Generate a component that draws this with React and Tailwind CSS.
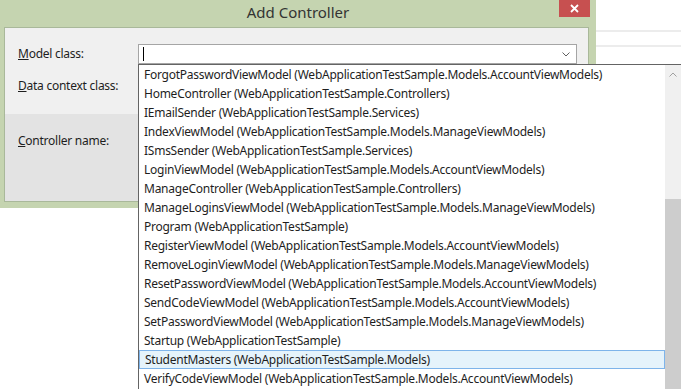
const items = [
  "ForgotPasswordViewModel (WebApplicationTestSample.Models.AccountViewModels)",
  "HomeController (WebApplicationTestSample.Controllers)",
  "IEmailSender (WebApplicationTestSample.Services)",
  "IndexViewModel (WebApplicationTestSample.Models.ManageViewModels)",
  "ISmsSender (WebApplicationTestSample.Services)",
  "LoginViewModel (WebApplicationTestSample.Models.AccountViewModels)",
  "ManageController (WebApplicationTestSample.Controllers)",
  "ManageLoginsViewModel (WebApplicationTestSample.Models.ManageViewModels)",
  "Program (WebApplicationTestSample)",
  "RegisterViewModel (WebApplicationTestSample.Models.AccountViewModels)",
  "RemoveLoginViewModel (WebApplicationTestSample.Models.ManageViewModels)",
  "ResetPasswordViewModel (WebApplicationTestSample.Models.AccountViewModels)",
  "SendCodeViewModel (WebApplicationTestSample.Models.AccountViewModels)",
  "SetPasswordViewModel (WebApplicationTestSample.Models.ManageViewModels)",
  "Startup (WebApplicationTestSample)",
  "StudentMasters (WebApplicationTestSample.Models)",
  "VerifyCodeViewModel (WebApplicationTestSample.Models.AccountViewModels)",
];

const font = { fontFamily: '"Noto Sans", "Noto Sans CJK KR", sans-serif' };

const App = () => {
  return (
    <div
      className="relative w-[681px] h-[389px] overflow-hidden bg-white text-[12px] tracking-[-0.25px] text-[#1e1e1e]"
      style={font}
    >
      <div className="flex">
        {/* dialog */}
        <div className="w-[596px] h-[208px] bg-[#c5d4b0] flex flex-col">
          <div className="relative h-[27px] flex items-center justify-center">
            <span className="text-[15px] tracking-normal text-[#333] -mt-[3px]">Add Controller</span>
            <div className="absolute top-0 right-[6px] w-[31px] h-[17px] bg-[#c75050] flex items-center justify-center">
              <svg width="9" height="9" viewBox="0 0 9 9">
                <path d="M1 1 L8 8 M8 1 L1 8" stroke="white" strokeWidth="1.8" />
              </svg>
            </div>
          </div>
          <div className="ml-[4px] mr-[7px] h-[175px] border border-[#a9b89a] flex flex-col">
            <div className="h-[86px] bg-[#f0f0f0] flex flex-col pl-[13px] pr-[11px] pt-[16px]">
              <div className="flex items-center h-[20px]">
                <span className="w-[120px]">
                  <span className="underline">M</span>odel class:
                </span>
                <div className="flex-1 h-[20px] bg-white border border-[#a5a5a5] flex items-center justify-between pl-[4px] pr-[6px]">
                  <div className="w-[1px] h-[14px] bg-black" />
                  <svg width="8" height="5" viewBox="0 0 8 5">
                    <path d="M0.5 0.5 L4 4 L7.5 0.5" stroke="#606060" fill="none" strokeWidth="1" />
                  </svg>
                </div>
              </div>
              <div className="mt-[12px] h-[20px] flex items-center">
                <span>
                  <span className="underline">D</span>ata context class:
                </span>
              </div>
            </div>
            <div className="flex-1 bg-[#e3e3e3] pl-[13px] pt-[18px]">
              <span>
                <span className="underline">C</span>ontroller name:
              </span>
            </div>
          </div>
        </div>
        {/* background page */}
        <div className="flex-1 flex flex-col">
          <div className="h-[30px]" />
          <div className="h-[2px] bg-[#ececec]" />
          <div className="h-[13px]" />
          <div className="h-[2px] bg-[#ececec]" />
        </div>
      </div>

      {/* open dropdown list */}
      <div className="absolute left-[138px] top-[64px] w-[543px] h-[325px] bg-white border-l border-t border-[#646464] flex">
        <div className="flex-1 flex flex-col">
          {items.map((item) => {
            const selected = item.startsWith("StudentMasters");
            return (
              <div
                key={item}
                className={`h-[19px] flex items-center pl-[5px] whitespace-nowrap ${
                  selected ? "bg-[#e5f3fb] border border-[#7eb4ea] pl-[4px]" : ""
                }`}
              >
                {item}
              </div>
            );
          })}
        </div>
        <div className="w-[16px] flex flex-col">
          <div className="h-[134px] bg-[#f0f0f0] flex justify-center pt-[7px]">
            <svg width="8" height="5" viewBox="0 0 8 5">
              <path d="M0.5 4.5 L4 1 L7.5 4.5" stroke="#a0a0a0" fill="none" strokeWidth="1" />
            </svg>
          </div>
          <div className="flex-1 bg-[#cdcdcd]" />
        </div>
      </div>
    </div>
  );
};

export default App;
